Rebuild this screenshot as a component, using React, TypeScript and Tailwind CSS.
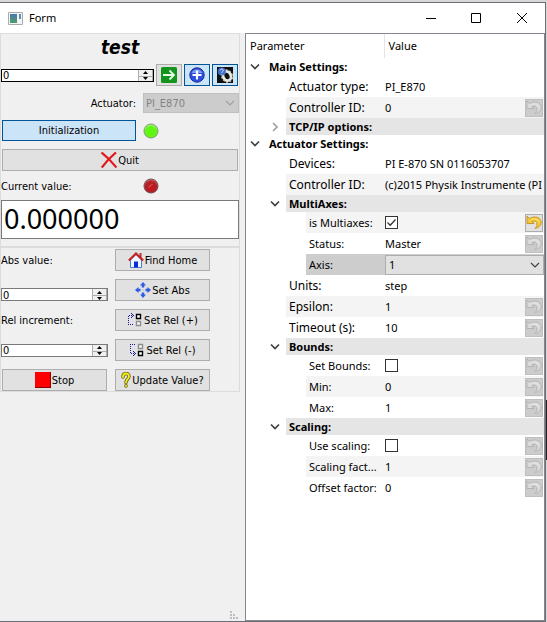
import type { ReactNode } from "react";

type Row = {
  label: string;
  level: 0 | 1 | 2;
  kind: "group" | "text" | "check" | "select";
  value?: string;
  checked?: boolean;
  closed?: boolean;
  reset?: "off" | "on";
  tone?: string;
};

const rows: Row[] = [
  { label: "Main Settings:", level: 0, kind: "group" },
  { label: "Actuator type:", level: 1, kind: "text", value: "PI_E870" },
  { label: "Controller ID:", level: 1, kind: "text", value: "0", reset: "off", tone: "bg-[#f4f4f4]" },
  { label: "TCP/IP options:", level: 1, kind: "group", closed: true, tone: "bg-[#e5e5e5]" },
  { label: "Actuator Settings:", level: 0, kind: "group" },
  { label: "Devices:", level: 1, kind: "text", value: "PI E-870 SN 0116053707" },
  { label: "Controller ID:", level: 1, kind: "text", value: "(c)2015 Physik Instrumente (PI", tone: "bg-[#f4f4f4]" },
  { label: "MultiAxes:", level: 1, kind: "group", tone: "bg-[#e5e5e5]" },
  { label: "is Multiaxes:", level: 2, kind: "check", checked: true, reset: "on", tone: "bg-[#f4f4f4]" },
  { label: "Status:", level: 2, kind: "text", value: "Master", reset: "off" },
  { label: "Axis:", level: 2, kind: "select", value: "1", tone: "bg-[#cdcdcd]" },
  { label: "Units:", level: 1, kind: "text", value: "step" },
  { label: "Epsilon:", level: 1, kind: "text", value: "1", reset: "off", tone: "bg-[#f4f4f4]" },
  { label: "Timeout (s):", level: 1, kind: "text", value: "10", reset: "off" },
  { label: "Bounds:", level: 1, kind: "group", tone: "bg-[#e5e5e5]" },
  { label: "Set Bounds:", level: 2, kind: "check", reset: "off" },
  { label: "Min:", level: 2, kind: "text", value: "0", reset: "off", tone: "bg-[#f4f4f4]" },
  { label: "Max:", level: 2, kind: "text", value: "1", reset: "off" },
  { label: "Scaling:", level: 1, kind: "group", tone: "bg-[#e5e5e5]" },
  { label: "Use scaling:", level: 2, kind: "check", reset: "off" },
  { label: "Scaling fact...", level: 2, kind: "text", value: "1", reset: "off", tone: "bg-[#f4f4f4]" },
  { label: "Offset factor:", level: 2, kind: "text", value: "0", reset: "off" },
];

const indent = ["w-5", "w-10", "w-15"];

function Chevron({ closed = false }: { closed?: boolean }) {
  return (
    <svg viewBox="0 0 10 10" className="size-[10px]" fill="none" stroke={closed ? "#a0a0a0" : "#404040"} strokeWidth="1.7">
      <path d={closed ? "M3 1l4 4-4 4" : "M1 2.5l4 4 4-4"} />
    </svg>
  );
}

function SelectArrow({ color }: { color: string }) {
  return (
    <svg viewBox="0 0 10 10" className="pointer-events-none absolute top-1/2 right-1 size-[10px] -translate-y-1/2" fill="none" stroke={color} strokeWidth="1.2">
      <path d="M1 3l4 4 4-4" />
    </svg>
  );
}

function ResetButton({ on }: { on: boolean }) {
  return (
    <button
      type="button"
      aria-label="Reset to default"
      className={`flex size-[18px] shrink-0 items-center justify-center border ${on ? "border-[#adadad] bg-[#e1e1e1]" : "border-[#bfbfbf] bg-[#cccccc]"}`}
    >
      <svg viewBox="0 0 16 16" className="size-4">
        <path
          d="M1 1v7.500h7L6 6.300c3-.8 5 .4 5 2.700 0 1.700-.8 3.300-2 4.500 4-.8 6.500-3.300 6.200-6.500C14.800 2.500 9 .3 3.500 3.500z"
          fill={on ? "#f6c830" : "#dadada"}
          stroke={on ? "#b9861c" : "#acacac"}
          strokeWidth="0.800"
          strokeLinejoin="round"
        />
        <path d="M4.500 5C8 3 12.500 4 13.300 7.500" fill="none" stroke={on ? "#fdea8c" : "#e8e8e8"} />
      </svg>
    </button>
  );
}

function TreeRow({ row, id }: { row: Row; id: string }) {
  const group = row.kind === "group";
  const height = row.level === 0 ? "h-[18px]" : group ? "h-[17px]" : "h-[21px]";
  const gutter = (
    <span className={`flex shrink-0 items-center justify-end pr-[6px] ${indent[row.level]}`}>
      {group && <Chevron closed={row.closed} />}
    </span>
  );
  if (group) {
    return (
      <tr>
        <th colSpan={2} scope="rowgroup" className="p-0 text-left text-[11px] font-bold">
          <div className={`flex ${height}`}>
            {gutter}
            <span className={`flex flex-1 items-center pl-[3px] ${row.tone ?? ""}`}>{row.label}</span>
          </div>
        </th>
      </tr>
    );
  }
  return (
    <tr>
      <th scope="row" className="p-0 text-left font-normal">
        <div className={`flex ${height}`}>
          {gutter}
          <div className={`flex min-w-0 flex-1 items-center pl-[3px] whitespace-nowrap ${row.level === 2 ? "text-[11px]" : ""} ${row.tone ?? ""}`}>
            <label htmlFor={id}>{row.label}</label>
          </div>
        </div>
      </th>
      <td className="p-0 text-[11px]">
        <div className={`flex items-center pl-px ${height} ${row.tone ?? ""}`}>
          <div className="flex min-w-0 flex-1 items-center overflow-hidden whitespace-nowrap">
            {row.kind === "text" && <output id={id}>{row.value}</output>}
            {row.kind === "check" && (
              <span className="relative flex">
                <input id={id} type="checkbox" defaultChecked={row.checked} className="peer size-[13px] appearance-none border border-[#333] bg-white" />
                <svg viewBox="0 0 13 13" className="pointer-events-none absolute inset-0 hidden size-[13px] peer-checked:block" fill="none" stroke="#333" strokeWidth="1.300">
                  <path d="M2.500 6.500l2.700 2.700L10.500 3.500" />
                </svg>
              </span>
            )}
            {row.kind === "select" && (
              <span className="relative block w-full">
                <select id={id} className="block h-5 w-full appearance-none border border-[#adadad] bg-[#e1e1e1] pl-[3px]">
                  <option>{row.value}</option>
                </select>
                <SelectArrow color="#404040" />
              </span>
            )}
          </div>
          {row.reset && <div className="pr-px"><ResetButton on={row.reset === "on"} /></div>}
        </div>
      </td>
    </tr>
  );
}

function Spin({ id, label, border }: { id: string; label: string; border: string }) {
  return (
    <div className={`flex h-[13px] w-full border bg-white ${border}`}>
      <input id={id} aria-label={label} defaultValue="0" className="min-w-0 flex-1 pt-px pl-px leading-[10px] outline-none" />
      <div className="flex w-[15px] flex-col border-x border-[#adadad] bg-[#f0f0f0]">
        <button type="button" aria-label={`${label} up`} className="flex h-[7px] items-center justify-center border-b border-[#adadad]">
          <svg viewBox="0 0 5 3" className="h-[3px] w-[5px]"><path d="M0 3L2.500 0 5 3z" /></svg>
        </button>
        <button type="button" aria-label={`${label} down`} className="flex h-1 items-center justify-center">
          <svg viewBox="0 0 5 3" className="h-[3px] w-[5px]"><path d="M0 0h5L2.500 3z" /></svg>
        </button>
      </div>
    </div>
  );
}

function Push({ icon, children }: { icon?: ReactNode; children: ReactNode }) {
  return (
    <button type="button" className="flex h-[22px] w-full items-center justify-center gap-px border border-[#adadad] bg-[#e1e1e1] whitespace-nowrap">
      {icon}
      <span className="pt-[2px]">{children}</span>
    </button>
  );
}

function Led({ on }: { on: boolean }) {
  const id = on ? "led-green" : "led-red";
  return (
    <svg viewBox="0 0 16 16" className="size-4" role="img" aria-label={on ? "ready" : "idle"}>
      <defs>
        <radialGradient id={id} cx="0.5" cy="0.6" r="0.6">
          <stop offset="0" stopColor={on ? "#5cf50a" : "#c4161c"} />
          <stop offset="0.7" stopColor={on ? "#66f51c" : "#b32029"} />
          <stop offset="1" stopColor={on ? "#b8f79a" : "#d98080"} />
        </radialGradient>
      </defs>
      <circle cx="8" cy="8" r="7" fill={`url(#${id})`} stroke={on ? "#7d9a76" : "#6e4a4c"} />
      {!on && <path d="M5.500 9.500L9.500 6" stroke="#d2474b" strokeWidth="1.500" />}
    </svg>
  );
}

const HomeIcon = (
  <svg viewBox="0 0 16 16" className="size-4">
    <path d="M11.500 1h2v5h-2z" fill="#b9332b" />
    <path d="M2.500 8L8 2.500 13.500 8v7.500h-11z" fill="#eef5ff" stroke="#4a7fd0" />
    <path d="M6 9.500h4v6H6z" fill="#0a2bd8" />
    <path d="M.8 8.500L8 1.500l7.200 7" fill="none" stroke="#c5221f" strokeWidth="2" />
  </svg>
);

const MoveIcon = (
  <svg viewBox="0 0 16 16" className="size-4" fill="#2f5be6">
    <path d="M8 0l3 3.500H9.200V5.500H6.800V3.500H5zM8 16l3-3.500H9.200V10.500H6.800v2H5zM0 8l3.500-3v1.800h2v2.400h-2V11zM16 8l-3.500-3v1.800h-2v2.400h2V11z" />
    <path d="M7.500 7.500h1v1h-1z" fill="#8aa" />
  </svg>
);

function RelIcon({ plus }: { plus: boolean }) {
  return (
    <svg viewBox="0 0 16 16" className="size-4" fill="none">
      <g stroke="#1a1aa0" strokeDasharray="1 1">
        <path d={plus ? "M1.500 4V13M2 3.500H7M3 12.500H6" : "M1.500 2V12M3 2.500H6M2 11.500H7"} />
        <path d={plus ? "M4 1.500h1M5 2.500h1M5 4.500h1M4 5.500h1" : "M4 9.500h1M5 10.500h1M5 12.500h1M4 13.500h1"} />
      </g>
      <path d="M9.500 2.500h4v4h-4z" fill="#fff" stroke={plus ? "#000" : "#8c8c8c"} strokeWidth="1.400" />
      <path d="M9.500 9.500h4v4h-4z" fill="#fff" stroke={plus ? "#8c8c8c" : "#000"} strokeWidth="1.400" />
    </svg>
  );
}

const StopIcon = (
  <svg viewBox="0 0 16 16" className="size-4">
    <path d="M0 0h16v16H0z" fill="#8c0000" />
    <path d="M0 0h15v15H0z" fill="#ff0000" />
  </svg>
);

const HelpIcon = (
  <svg viewBox="0 0 10 16" className="h-4 w-[10px]" fill="none" strokeLinecap="round">
    <path d="M2 5c0-4.500 6-4.500 6-.5 0 2.500-3 2.500-3 6M5 13.800v.2" stroke="#5f5a10" strokeWidth="3.400" />
    <path d="M2 5c0-4.500 6-4.500 6-.5 0 2.500-3 2.500-3 6M5 13.800v.2" stroke="#f5ea1a" strokeWidth="1.900" />
  </svg>
);

const QuitIcon = (
  <svg viewBox="0 0 16 16" className="size-4" fill="none" stroke="#e3171a" strokeWidth="2.200">
    <path d="M.5.5C5 4 11 10 15.500 15.500M15 .5C10 4.500 5 10 .8 15.500" />
  </svg>
);

const tool = "flex h-[22px] w-[26px] shrink-0 items-center justify-center border";

export default function App() {
  return (
    <div className="flex min-h-screen bg-[#d8d8d8] pt-[2px] text-black">
      <div className="flex min-w-0 flex-1 flex-col border-t border-r border-b border-[#6b6e75] bg-[#f0f0f0]">
        <header className="flex h-[30px] shrink-0 items-center bg-white pl-2 font-['Noto_Sans',sans-serif] text-[12px]">
          <svg viewBox="0 0 15 13" className="h-[13px] w-[15px]">
            <defs>
              <linearGradient id="form-icon" x2="0" y2="1">
                <stop offset="0" stopColor="#4a78b0" />
                <stop offset="1" stopColor="#4f9c6c" />
              </linearGradient>
            </defs>
            <path d="M.5.5h14v12H.5z" fill="#f4f4f4" stroke="#a8acb0" />
            <path d="M2 2h7v9H2z" fill="url(#form-icon)" />
            <path d="M11 2h2v5h-2z" fill="#5a8fb0" />
          </svg>
          <h1 className="flex-1 pl-[6px] text-[11px]">Form</h1>
          <button type="button" aria-label="Minimize" className="flex h-full w-[45px] items-center justify-center">
            <svg viewBox="0 0 10 10" className="size-[10px]"><path d="M0 5.500h10" stroke="#000" /></svg>
          </button>
          <button type="button" aria-label="Maximize" className="flex h-full w-[45px] items-center justify-center">
            <svg viewBox="0 0 10 10" className="size-[10px]"><path d="M.5.5h9v9h-9z" fill="none" stroke="#000" /></svg>
          </button>
          <button type="button" aria-label="Close" className="flex h-full w-[47px] items-center justify-center">
            <svg viewBox="0 0 10 10" className="size-[10px]"><path d="M0 0l10 10M10 0L0 10" stroke="#000" /></svg>
          </button>
        </header>

        <main className="flex flex-1">
          <div className="flex w-[245px] shrink-0 flex-col font-['DejaVu_Sans_Condensed','DejaVu_Sans',sans-serif] text-[11px]">
            <section className="mr-[5px] flex flex-col border border-[#dcdcdc] pb-[7px]">
              <h2 className="h-[30px] text-center text-[19px] leading-[26px] font-bold italic">test</h2>
              <div className="flex items-center gap-[2px] pr-px">
                <Spin id="position" label="Position" border="border-black" />
                <button type="button" aria-label="Go" className={`${tool} border-[#adadad] bg-[#e1e1e1]`}>
                  <svg viewBox="0 0 16 16" className="size-4" fill="none">
                    <rect width="16" height="16" rx="1.500" fill="#12941f" />
                    <path d="M2 8h11M8.500 3.500L13 8l-4.500 4.500" stroke="#e8ffe8" strokeWidth="1.800" />
                  </svg>
                </button>
                <button type="button" aria-label="Add" className={`${tool} border-[#00549a] bg-[#cce4f7]`}>
                  <svg viewBox="0 0 16 16" className="size-4" fill="none">
                    <circle cx="8" cy="8" r="7.200" fill="#2a50de" stroke="#1a2a90" />
                    <path d="M2.500 6a6 6 0 0 1 11 0z" fill="#7d9bf5" />
                    <path d="M8 3.500v9M3.500 8h9" stroke="#fff" strokeWidth="2.200" />
                  </svg>
                </button>
                <button type="button" aria-label="Settings" className={`${tool} border-[#00549a] bg-[#cce4f7]`}>
                  <svg viewBox="0 0 16 16" className="size-4" fill="none">
                    <path d="M0 0h16v16H0z" fill="#101010" />
                    <ellipse cx="10" cy="9" rx="3.800" ry="4.800" transform="rotate(-25 10 9)" stroke="#e6e9e2" strokeWidth="2.800" />
                    <ellipse cx="10" cy="9" rx="5.300" ry="6.300" transform="rotate(-25 10 9)" stroke="#c9cdc6" strokeWidth="1.200" strokeDasharray="2 1.500" />
                    <circle cx="4.800" cy="4.500" r="4" fill="#3f6fc8" />
                    <path d="M3.300 3.500c0-2 3-2 3 0 0 1.200-1.500 1-1.500 2.300M4.800 7v.8" stroke="#dfe9ff" />
                  </svg>
                </button>
              </div>
              <div className="mt-[7px] flex h-5 items-center justify-end">
                <label htmlFor="actuator" className="pt-[2px] pr-[7px]">Actuator:</label>
                <span className="relative block w-24">
                  <select id="actuator" disabled className="block h-5 w-full appearance-none border border-[#bfbfbf] bg-[#cccccc] pt-[2px] pl-[2px] text-[#838383] opacity-100">
                    <option>PI_E870</option>
                  </select>
                  <SelectArrow color="#a0a0a0" />
                </span>
              </div>
              <div className="mt-[7px] flex h-[21px] items-center gap-[7px] pl-px">
                <button type="button" className="h-[21px] w-[134px] border border-[#00549a] bg-[#cce4f7] pt-[2px]">Initialization</button>
                <Led on />
              </div>
              <div className="mt-2 px-px">
                <Push icon={QuitIcon}>Quit</Push>
              </div>
              <div className="mt-[7px] flex h-4 items-center">
                <label htmlFor="current" className="w-[142px] pt-[2px]">Current value:</label>
                <Led on={false} />
              </div>
              <input id="current" readOnly defaultValue="0.000000" className="mt-[6px] h-[39px] w-full border border-[#7a7a7a] bg-white pl-[2px] font-['Noto_Sans',sans-serif] text-[27px] outline-none" />
            </section>

            <section className="mr-[5px] grid grid-cols-[107px_95px] gap-x-[7px] gap-y-2 border border-[#dcdcdc] pt-px">
              <label htmlFor="abs" className="self-center pt-[2px]">Abs value:</label>
              <Push icon={HomeIcon}>Find Home</Push>
              <div className="flex items-end"><Spin id="abs" label="Abs value" border="border-[#7a7a7a]" /></div>
              <Push icon={MoveIcon}>Set Abs</Push>
              <label htmlFor="rel" className="self-center pt-[2px]">Rel increment:</label>
              <Push icon={<RelIcon plus />}>Set Rel (+)</Push>
              <div className="flex items-center"><Spin id="rel" label="Rel increment" border="border-[#7a7a7a]" /></div>
              <Push icon={<RelIcon plus={false} />}>Set Rel (-)</Push>
              <div className="px-px"><Push icon={StopIcon}>Stop</Push></div>
              <Push icon={HelpIcon}>Update Value?</Push>
            </section>

            <svg viewBox="0 0 8 8" className="mt-auto mr-[7px] mb-[2px] size-2 self-end" fill="#bdbdbd">
              <path d="M0 0h2v2H0zM0 3h2v2H0zM3 3h2v2H3zM0 6h2v2H0zM3 6h2v2H3zM6 6h2v2H6z" />
            </svg>
          </div>

          <div className="min-w-0 flex-1 border border-[#828790] bg-white font-['Noto_Sans',sans-serif] text-[12px] leading-4">
            <table className="w-full table-fixed border-collapse">
              <colgroup>
                <col className="w-[138px]" />
                <col />
              </colgroup>
              <thead>
                <tr className="h-6 text-[11px]">
                  <th scope="col" className="border-r border-[#e5e5e5] p-0 pl-1 text-left font-normal">Parameter</th>
                  <th scope="col" className="p-0 pl-1 text-left font-normal">Value</th>
                </tr>
              </thead>
              <tbody>
                {rows.map((row, i) => (
                  <TreeRow key={i} row={row} id={`param-${i}`} />
                ))}
              </tbody>
            </table>
          </div>
        </main>
      </div>
      <div className="flex w-px flex-col">
        <div className="mt-[398px] h-[60px] bg-[#202024]" />
      </div>
    </div>
  );
}
